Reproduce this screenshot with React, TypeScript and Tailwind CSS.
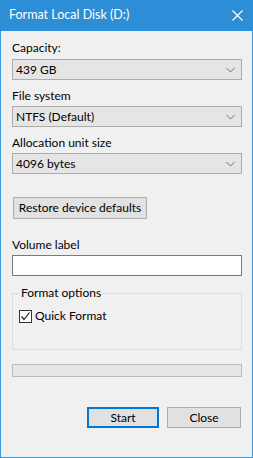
import React from "react";

const Chevron = () => (
  <svg width="9" height="5" viewBox="0 0 9 5" className="absolute right-[6px] top-1/2 -translate-y-1/2">
    <path d="M0.5 0.5 L4.5 4.5 L8.5 0.5" fill="none" stroke="#707070" strokeWidth="1" />
  </svg>
);

const Combo = ({ value }: { value: string }) => (
  <div className="relative ml-[11px] w-[230px] h-[21px] bg-[#e5e5e5] border border-[#acacac] flex items-center pl-[3px] text-[12px] text-black">
    {value}
    <Chevron />
  </div>
);

const Label = ({ text, mt }: { text: string; mt: string }) => (
  <div className={`ml-[11px] ${mt} h-[16px] leading-[16px] text-[12px] text-black`}>{text}</div>
);

export default function App() {
  return (
    <div
      className="w-[253px] h-[458px] bg-[#f0f0f0] border-x border-b border-[#3a99dd] flex flex-col"
      style={{ fontFamily: 'Lato, "Noto Sans", sans-serif' }}
    >
      <div className="h-[31px] -mx-px bg-[#2b8ed6] flex items-center justify-between pl-[9px] pr-[10px] shrink-0">
        <span className="text-white text-[12.5px] leading-none">Format Local Disk (D:)</span>
        <svg width="11" height="11" viewBox="0 0 11 11">
          <path d="M0.5 0.5 L10.5 10.5 M10.5 0.5 L0.5 10.5" stroke="#ffffff" strokeWidth="1.2" />
        </svg>
      </div>

      <div className="ml-[11px] mt-[9px] h-[16px] leading-[16px] text-[12px] text-black">Capacity:</div>
      <div className="mt-[3px]"><Combo value="439 GB" /></div>

      <Label text="File system" mt="mt-[8px]" />
      <div className="mt-[2px]"><Combo value="NTFS (Default)" /></div>

      <Label text="Allocation unit size" mt="mt-[8px]" />
      <div className="mt-[2px]"><Combo value="4096 bytes" /></div>

      <div className="ml-[12px] mt-[23px] w-[134px] h-[22px] bg-[#e1e1e1] border border-[#adadad] flex items-center justify-center text-[12px] text-black">
        Restore device defaults
      </div>

      <Label text="Volume label" mt="mt-[18px]" />
      <div className="ml-[11px] mt-[2px] w-[230px] h-[21px] bg-white border border-[#7a7a7a]" />

      <div className="relative ml-[11px] mt-[17px] w-[230px] h-[57px] border border-[#dcdcdc]">
        <span className="absolute left-[6px] -top-[9px] px-[2px] bg-[#f0f0f0] text-[12px] leading-[16px] text-black">
          Format options
        </span>
        <div className="absolute left-[6px] top-[14px] flex items-center gap-[3px]">
          <div className="w-[13px] h-[13px] bg-white border border-[#333333] flex items-center justify-center">
            <svg width="11" height="11" viewBox="0 0 11 11">
              <path d="M1.5 5.5 L4 8.5 L9.5 1.5" fill="none" stroke="#222222" strokeWidth="1.2" />
            </svg>
          </div>
          <span className="text-[12px] leading-[16px] text-black">Quick Format</span>
        </div>
      </div>

      <div className="ml-[11px] mt-[14px] w-[230px] h-[13px] bg-[#e6e6e6] border border-[#bcbcbc]" />

      <div className="mt-[30px] ml-[86px] flex gap-[8px]">
        <div className="w-[72px] h-[21px] bg-[#e1e1e1] border-2 border-[#0078d7] flex items-center justify-center text-[12px] text-black">
          Start
        </div>
        <div className="w-[74px] h-[21px] bg-[#e1e1e1] border border-[#adadad] flex items-center justify-center text-[12px] text-black">
          Close
        </div>
      </div>
    </div>
  );
}
